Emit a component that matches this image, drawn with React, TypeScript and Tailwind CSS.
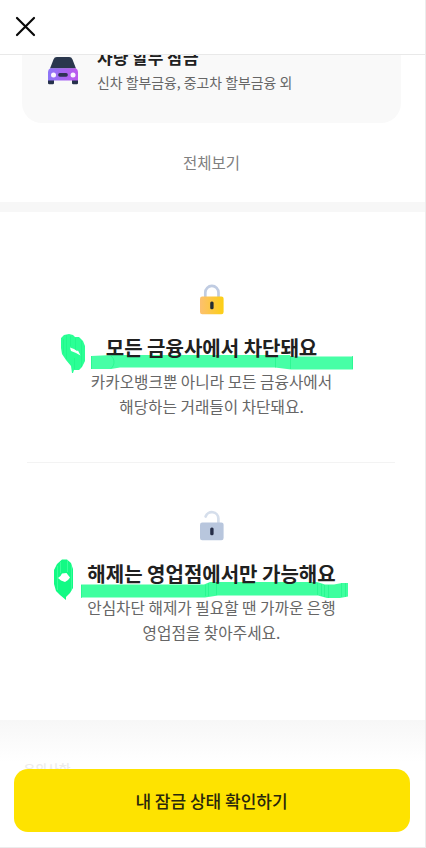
import React from 'react';

const CarIcon = () => (
    <svg width="32" height="30" viewBox="0 0 32 30" fill="none">
        <defs>
            <linearGradient id="car" x1="0" y1="0" x2="1" y2="0">
                <stop offset="0" stopColor="#8d75f7" />
                <stop offset="1" stopColor="#bd59ee" />
            </linearGradient>
        </defs>
        <path d="M1 22h6v5a1.2 1.2 0 0 1-1.2 1.2H2.2A1.2 1.2 0 0 1 1 27zM25 22h6v5a1.2 1.2 0 0 1-1.2 1.2h-3.6A1.2 1.2 0 0 1 25 27z" fill="#26314c" />
        <path d="M3 12.500 6.600 3.200Q7.400 1 9.800 1h12.400q2.400 0 3.200 2.200L29 12.500z" fill="#2a374d" />
        <path d="M3.200 12.200h25.600q2.200 1 2.200 3.800v8.400H1V16q0-2.800 2.200-3.800z" fill="url(#car)" />
        <circle cx="6.500" cy="18.900" r="2.500" fill="#fbf5ff" />
        <circle cx="26" cy="18.900" r="2.500" fill="#fbf5ff" />
        <rect x="11.200" y="17.100" width="9.600" height="3.600" rx="1.600" fill="#2e3155" />
    </svg>
);

const LockIcon = () => (
    <svg width="24" height="31" viewBox="0 0 24 31" fill="none">
        <defs>
            <linearGradient id="lock" x1="0" y1="0" x2="1" y2="0">
                <stop offset="0" stopColor="#fcc070" />
                <stop offset="1" stopColor="#fccf14" />
            </linearGradient>
        </defs>
        <path d="M5.300 13.500V8.500a6.600 6.600 0 0 1 13.200 0v5" stroke="#c0cce2" strokeWidth="2.700" />
        <rect x="0" y="12.600" width="23.600" height="17.600" rx="2.200" fill="url(#lock)" />
        <rect x="10.200" y="17.400" width="3.400" height="7.800" rx="1.500" fill="#232d32" />
    </svg>
);

const UnlockIcon = () => (
    <svg width="24" height="31" viewBox="0 0 24 31" fill="none">
        <path d="M5.600 6.500A6.600 6.600 0 0 1 18.400 8.500v5" stroke="#d5deeb" strokeWidth="2.700" strokeLinecap="round" />
        <rect x="0" y="12.600" width="23.600" height="17.600" rx="2.200" fill="#b8c6dd" />
        <rect x="10.200" y="17.400" width="3.400" height="7.800" rx="1.500" fill="#252d47" />
    </svg>
);

// Marker strokes, hand drawn
const FirstMark = () => (
    <svg className="absolute left-[58px] top-[330px]" width="298" height="46" viewBox="58 330 298 46" fill="none">
        <path fill="#2bff95" d="M61 338 64 335 69 334 73 335 75 337 79 337 83 341 85 346V361L82 367 79 370H74L73 373H72L71 366 66 360 62 354 61 348z" />
        <path d="M66.500 335v24M70.500 336v10M75.500 338v12M81.500 341v26M74.500 358v11M63.500 339v14" stroke="#18f383" strokeOpacity=".5" />
        <path fill="#fff" d="M70 347.500 74 349 77 351 78 350.500 80.500 355.500 76 353 71 351z" />
        <path d="M91 356 112 355H290V356.500H353V369.500H291L275 367.500H120L111 369H91z" fill="#47ffa6" />
        <path d="M111 356c4 3 4 9 0 12.500M275.500 355v12.500M290.500 356v13M352.500 356v13M91.500 356v13" stroke="#22f58b" strokeOpacity=".7" />
    </svg>
);

const SecondMark = () => (
    <svg className="absolute left-[50px] top-[556px]" width="302" height="46" viewBox="50 556 302 46" fill="none">
        <path fill="#12fa84" d="M54 570 57 564 62 559.500H67L71 563 73 569V588L70 593 66 597V600L60 595 56 591 54 584z" />
        <path d="M60.500 562v11M57.500 566v24M71.500 565v25M67.500 560v12" stroke="#4affa5" strokeOpacity=".7" />
        <path fill="#fff" d="M58 578 60.500 576 62 573.500 66.500 573 68 575 70 577.500 68 580 65 582 61 580.500z" />
        <path d="M81 584.500H204L210 582H317L325 584.500H334L342 583H348V596.500L340 598H327L318 595.500H218L205 597.500H81z" fill="#3fff9f" />
        <path d="M81.500 585v13M205.500 585v11M208.500 583v13M216.500 582v13M317.500 583v12M321.500 584v12M324.500 585v12M328.500 585v13M341.500 583v14M345.500 583v14" stroke="#1df388" strokeOpacity=".6" />
    </svg>
);

interface InfoProps {
    icon: React.ReactNode;
    title: string;
    lines: string[];
}

const Info: React.FC<InfoProps> = ({ icon, title, lines }) => (
    <div className="flex flex-col items-center text-center whitespace-nowrap">
        {icon}
        <h2 className="relative z-10 mt-[18px] text-xl leading-[30px] font-bold text-[#202020]">{title}</h2>
        <p className="relative z-10 mt-[6px] text-[15.700px] leading-[25px] text-[#666666]">
            {lines.map((line) => (
                <span key={line} className="block">{line}</span>
            ))}
        </p>
    </div>
);

export default function App() {
    return (
        <div className="relative isolate flex h-[848px] w-[426px] flex-col overflow-hidden border-r border-b border-[#ececec] bg-white font-['Noto_Sans_CJK_KR',sans-serif]">
            <header className="flex h-[55px] shrink-0 items-center border-b border-[#e9e9e9] pl-[15px]">
                <button aria-label="닫기">
                    <svg width="21" height="21" viewBox="0 0 21 21" className="-mt-px">
                        <path d="M2 2 19 19M19 2 2 19" stroke="#080808" strokeWidth="2.200" strokeLinecap="round" />
                    </svg>
                </button>
            </header>

            <section className="flex h-[147px] shrink-0 flex-col items-center overflow-hidden">
                <div className="-mt-[30px] ml-[22px] flex h-[98px] w-[379px] shrink-0 items-start self-start rounded-[20px] bg-[#f9f9f9] pt-[31px] pl-[25px]">
                    <CarIcon />
                    <div className="-mt-[12px] ml-[18px] whitespace-nowrap">
                        <p className="text-[17px] leading-[26px] font-bold text-[#202020]">차량 할부 잠금</p>
                        <p className="text-[13.900px] leading-[24px] text-[#666666]">신차 할부금융, 중고차 할부금융 외</p>
                    </div>
                </div>
                <button className="mt-[27px] mr-[2px] text-[15.500px] leading-6 text-[#808080]">전체보기</button>
            </section>

            <div className="h-[10px] shrink-0 bg-[#f7f7f7]" />

            <main className="h-[508px] shrink-0 pt-[72px] pr-[2px]">
                <Info
                    icon={<LockIcon />}
                    title="모든 금융사에서 차단돼요"
                    lines={['카카오뱅크뿐 아니라 모든 금융사에서', '해당하는 거래들이 차단돼요.']}
                />
                <hr className="mt-[43px] mb-[47px] ml-[27px] w-[368px] border-[#f3f3f3]" />
                <Info
                    icon={<UnlockIcon />}
                    title="해제는 영업점에서만 가능해요"
                    lines={['안심차단 해제가 필요할 땐 가까운 은행', '영업점을 찾아주세요.']}
                />
            </main>

            <footer className="h-[127px] shrink-0 bg-linear-to-b from-[#f7f7f7] to-white to-[42px] pl-[13.500px]">
                <p className="pt-[39px] pl-[10px] text-[12.800px] leading-5 font-medium text-[#ececec]">유의사항</p>
                <button className="relative -mt-[10px] flex h-[62.500px] w-[396px] items-center justify-center rounded-[14px] bg-[#fee300] text-[17px] font-medium text-[#29270c]">
                    내 잠금 상태 확인하기
                </button>
            </footer>

            <FirstMark />
            <SecondMark />
        </div>
    );
}
